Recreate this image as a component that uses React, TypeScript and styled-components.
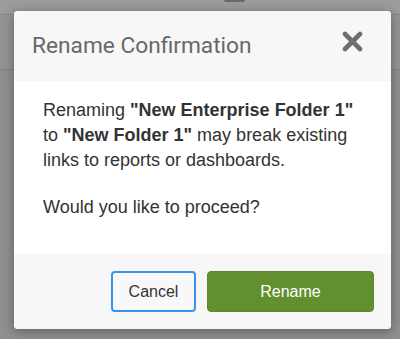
import styled, { createGlobalStyle } from 'styled-components';

const GlobalStyle = createGlobalStyle`
  html, body {
    margin: 0;
    padding: 0;
  }
  body {
    font-family: "Liberation Sans", Arial, sans-serif;
  }
`;

const Backdrop = styled.div`
  position: relative;
  width: 400px;
  height: 339px;
  overflow: hidden;
  background: #8f8f8f;
`;

const TopStrip = styled.div`
  position: relative;
  height: 14px;
  background: #9c9c9c;
  border-bottom: 1px solid #868686;
`;

const Tab = styled.span`
  position: absolute;
  left: 224px;
  top: 0;
  width: 21px;
  height: 2px;
  background: #6a6a6a;
  border-radius: 0 0 2px 2px;
`;

const Band = styled.div`
  height: 54px;
  background: #949494;
  border-bottom: 1px solid #828282;
`;

const Dialog = styled.div`
  position: absolute;
  left: 14px;
  top: 11px;
  width: 377px;
  height: 318px;
  display: flex;
  flex-direction: column;
  border-radius: 4px;
  overflow: hidden;
  background: #fff;
  box-shadow: 0 2px 12px rgba(0, 0, 0, 0.35);
`;

const Header = styled.div`
  height: 70px;
  flex-shrink: 0;
  display: flex;
  align-items: center;
  justify-content: space-between;
  padding: 0 28px 0 18px;
  background: #f7f7f7;
`;

const Title = styled.h2`
  margin: 0;
  font-family: Roboto, "Liberation Sans", sans-serif;
  font-size: 22.7px;
  font-weight: 400;
  line-height: 26px;
  color: #686868;
`;

const CloseButton = styled.button`
  display: flex;
  align-items: center;
  justify-content: center;
  width: 21px;
  height: 21px;
  margin-top: -9px;
  padding: 0;
  border: 0;
  background: none;
  cursor: pointer;
`;

const Body = styled.div`
  flex: 1;
  padding: 17px 29px 0 29px;
  font-size: 18px;
  line-height: 25px;
  color: #333;
`;

const Paragraph = styled.p`
  margin: 0 0 22px;
`;

const Footer = styled.div`
  height: 75px;
  flex-shrink: 0;
  display: flex;
  align-items: center;
  justify-content: flex-end;
  gap: 11px;
  padding: 0 17px 0 0;
  background: #f7f7f7;
  box-sizing: border-box;
`;

const Button = styled.button<{ $primary?: boolean }>`
  height: 41px;
  width: ${(p) => (p.$primary ? '167px' : '85px')};
  border-radius: 4px;
  font-family: "Liberation Sans", Arial, sans-serif;
  font-size: 16px;
  cursor: pointer;
  box-sizing: border-box;
  color: ${(p) => (p.$primary ? '#fff' : '#333')};
  background: ${(p) => (p.$primary ? '#62902e' : '#f8f8f8')};
  border: ${(p) => (p.$primary ? '1px solid #5c8a2a' : '2px solid #3894ea')};
`;

const CloseIcon = () => (
  <svg width="21" height="21" viewBox="0 0 21 21">
    <path
      d="M3 3 L18 18 M18 3 L3 18"
      stroke="#6e6e6e"
      strokeWidth="4.6"
      strokeLinecap="round"
    />
  </svg>
);

const App = () => (
  <>
    <GlobalStyle />
    <Backdrop>
      <TopStrip>
        <Tab />
      </TopStrip>
      <Band />
      <Dialog>
        <Header>
          <Title>Rename Confirmation</Title>
          <CloseButton aria-label="Close">
            <CloseIcon />
          </CloseButton>
        </Header>
        <Body>
          <Paragraph>
            Renaming <b>"New Enterprise Folder 1"</b> to <b>"New Folder 1"</b> may
            break existing links to reports or dashboards.
          </Paragraph>
          <Paragraph>Would you like to proceed?</Paragraph>
        </Body>
        <Footer>
          <Button>Cancel</Button>
          <Button $primary>Rename</Button>
        </Footer>
      </Dialog>
    </Backdrop>
  </>
);

export default App;
